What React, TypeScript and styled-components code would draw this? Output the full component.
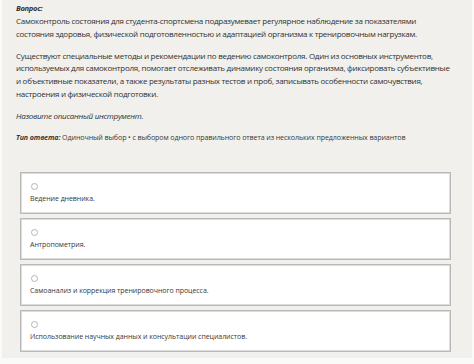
import * as React from "react"
import styled, { createGlobalStyle } from "styled-components"

const GlobalStyle = createGlobalStyle`
    html, body {
        margin: 0;
        padding: 0;
        background: #fafaf8;
    }
`

const Panel = styled.div`
    width: 470px;
    height: 358px;
    margin-left: 2px;
    padding: 3px 0 0 14px;
    box-sizing: border-box;
    background: #f1f0ec;
    color: #303030;
    font-family: "Open Sans", "Noto Sans", sans-serif;
    font-size: 8px;
    line-height: 12.8px;
    overflow: hidden;
`

const Label = styled.div`
    font-style: italic;
    font-weight: 700;
    font-size: 7.6px;
    line-height: 11px;
    letter-spacing: -0.3px;
    margin-bottom: 1px;
`

const Paragraph = styled.p<{ $italic?: boolean }>`
    margin: 0 0 9px 0;
    font-style: ${p => (p.$italic ? "italic" : "normal")};
    letter-spacing: -0.27px;
    white-space: nowrap;
`

const AnswerType = styled.div`
    margin-top: 8px;
    font-size: 7.1px;
    line-height: 11px;
    color: #383838;
    letter-spacing: -0.1px;
    b {
        font-style: italic;
    }
`

const Options = styled.div`
    display: flex;
    flex-direction: column;
    gap: 4px;
    margin-top: 29px;
    margin-left: 4px;
    width: 431px;
`

const Option = styled.label`
    display: flex;
    flex-direction: column;
    height: 42px;
    box-sizing: border-box;
    padding: 10px 0 0 9px;
    background: #fff;
    border: 1px solid #b9b9b9;
    box-shadow: inset 0 0 0 1px #dcdcdc;
    font-size: 7px;
    line-height: 11px;
    color: #383838;
    letter-spacing: -0.05px;
`

const Radio = styled.span`
    display: block;
    width: 5px;
    height: 5px;
    margin: 0 0 3px 1px;
    border: 1px solid #b5b5b5;
    border-radius: 50%;
    background: #fff;
`

const options = [
    "Ведение дневника.",
    "Антропометрия.",
    "Самоанализ и коррекция тренировочного процесса.",
    "Использование научных данных и консультации специалистов.",
]

export default function App() {
    return (
        <>
            <GlobalStyle />
            <Panel>
                <Label>Вопрос:</Label>
                <Paragraph>
                    Самоконтроль состояния для студента-спортсмена подразумевает регулярное наблюдение за показателями
                    <br />
                    состояния здоровья, физической подготовленностью и адаптацией организма к тренировочным нагрузкам.
                </Paragraph>
                <Paragraph>
                    Существуют специальные методы и рекомендации по ведению самоконтроля. Один из основных инструментов,
                    <br />
                    используемых для самоконтроля, помогает отслеживать динамику состояния организма, фиксировать субъективные
                    <br />
                    и объективные показатели, а также результаты разных тестов и проб, записывать особенности самочувствия,
                    <br />
                    настроения и физической подготовки.
                </Paragraph>
                <Paragraph $italic>Назовите описанный инструмент.</Paragraph>
                <AnswerType>
                    <b>Тип ответа:</b> Одиночный выбор • с выбором одного правильного ответа из нескольких предложенных вариантов
                </AnswerType>
                <Options>
                    {options.map(o => (
                        <Option key={o}>
                            <Radio />
                            {o}
                        </Option>
                    ))}
                </Options>
            </Panel>
        </>
    )
}
